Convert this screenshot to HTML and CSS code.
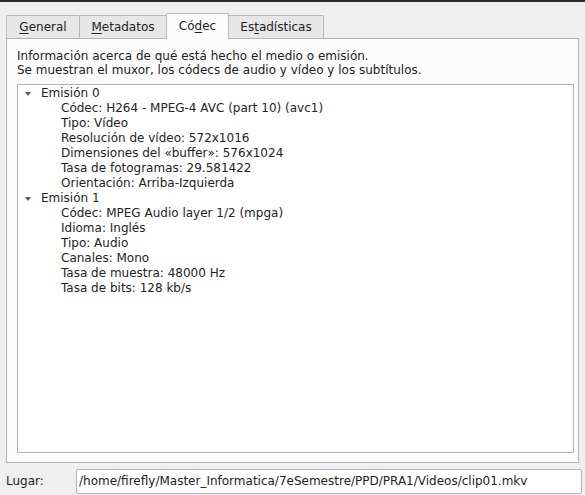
FILE: index.html
```html
<!DOCTYPE html>
<html>
<head>
<meta charset="utf-8">
<link rel="stylesheet" href="styles.css">
</head>
<body>
<div class="topbar"></div>
<div class="dialog">
  <div class="tabs">
    <div class="tab t-general"><u>G</u>eneral</div>
    <div class="tab t-meta"><u>M</u>etadatos</div>
    <div class="tab t-codec active">Có<u>d</u>ec</div>
    <div class="tab t-stats">Es<u>t</u>adísticas</div>
  </div>
  <div class="pane">
    <p class="desc">Información acerca de qué está hecho el medio o emisión.<br>Se muestran el muxor, los códecs de audio y vídeo y los subtítulos.</p>
    <div class="tree">
      <div class="row parent"><span class="arrow"></span>Emisión 0</div>
      <div class="row child">Códec: H264 - MPEG-4 AVC (part 10) (avc1)</div>
      <div class="row child">Tipo: Vídeo</div>
      <div class="row child">Resolución de vídeo: 572x1016</div>
      <div class="row child">Dimensiones del «buffer»: 576x1024</div>
      <div class="row child">Tasa de fotogramas: 29.581422</div>
      <div class="row child">Orientación: Arriba-Izquierda</div>
      <div class="row parent"><span class="arrow"></span>Emisión 1</div>
      <div class="row child">Códec: MPEG Audio layer 1/2 (mpga)</div>
      <div class="row child">Idioma: Inglés</div>
      <div class="row child">Tipo: Audio</div>
      <div class="row child">Canales: Mono</div>
      <div class="row child">Tasa de muestra: 48000 Hz</div>
      <div class="row child">Tasa de bits: 128 kb/s</div>
    </div>
  </div>
  <div class="footer">
    <span class="label">Lugar:</span>
    <div class="input">/home/firefly/Master_Informatica/7eSemestre/PPD/PRA1/Videos/clip01.mkv</div>
  </div>
</div>
</body>
</html>
```

FILE: styles.css
```css
html, body {
  margin: 0;
  padding: 0;
  background: #efefef;
  width: 585px;
  height: 495px;
  overflow: hidden;
  font-family: "DejaVu Sans", sans-serif;
  font-size: 12px;
  color: #232323;
}
.topbar {
  height: 2px;
  background: #2b2b2b;
}
.dialog {
  padding: 11px 3px 0 6px;
}
.tabs {
  display: flex;
  align-items: flex-end;
  height: 25px;
  position: relative;
  z-index: 1;
}
.tab {
  box-sizing: border-box;
  height: 23px;
  line-height: 22px;
  text-align: center;
  background: #e7e7e7;
  border: 1px solid #b9b9b9;
  border-bottom: none;
  border-radius: 2px 2px 0 0;
  margin-right: -1px;
}
.t-general { width: 74px; }
.t-meta { width: 88px; }
.t-codec { width: 63px; }
.t-stats { width: 96px; }
.tab u { text-decoration-thickness: 1px; text-underline-offset: 2px; }
.active {
  background: #fcfcfc;
  height: 26px;
  line-height: 24px;
  margin-bottom: -1px;
}
.pane {
  background: #fcfcfc;
  border: 1px solid #b4b4b4;
  width: 573px;
  height: 425px;
  box-sizing: border-box;
  padding: 10px 4px 9px 10px;
  display: flex;
  flex-direction: column;
}
.desc {
  margin: 0 0 7px 0;
  line-height: 14px;
}
.tree {
  flex: 1;
  background: #fff;
  border: 1px solid #b4b4b4;
  padding-top: 1px;
}
.row {
  height: 15px;
  line-height: 15px;
  white-space: nowrap;
}
.parent {
  padding-left: 7px;
  display: flex;
  align-items: center;
}
.arrow {
  width: 0;
  height: 0;
  border-left: 3px solid transparent;
  border-right: 3px solid transparent;
  border-top: 4px solid #5a5a5a;
  margin-right: 10px;
}
.child {
  padding-left: 43px;
}
.footer {
  display: flex;
  align-items: center;
  height: 26px;
  margin-top: 5px;
}
.label {
  width: 70px;
}
.input {
  flex: 1;
  height: 25px;
  line-height: 23px;
  box-sizing: border-box;
  background: #fff;
  border: 1px solid #b4b4b4;
  border-radius: 2px;
  padding-left: 2px;
}
```
